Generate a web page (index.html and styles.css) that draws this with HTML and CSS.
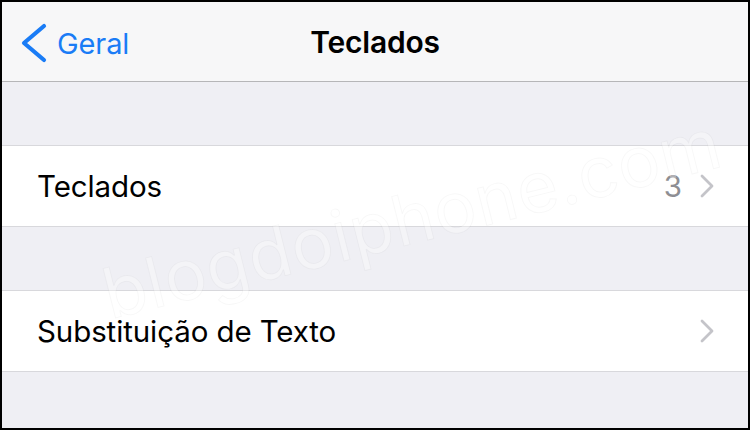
FILE: index.html
```html
<!DOCTYPE html>
<html lang="pt-BR">

<head>
  <meta charset="UTF-8" />
  <meta name="viewport" content="width=device-width, initial-scale=1.0" />
  <title>Teclados</title>
  <link rel="stylesheet" href="styles.css">
</head>

<body>
  <div class="tela">
    <!-- Barra de navegação -->
    <div class="barra">
      <div class="voltar">
        <svg class="setaVoltar" width="28" height="40" viewBox="0 0 28 40">
          <polyline points="24,3 4,20 24,37" fill="none" stroke="#1a7cf6" stroke-width="4.2" stroke-linecap="round" stroke-linejoin="round" />
        </svg>
        <span>Geral</span>
      </div>
      <h1>Teclados</h1>
    </div>

    <div class="espaco"></div>

    <div class="linha">
      <span class="rotulo">Teclados</span>
      <span class="valor">3</span>
      <svg class="seta" width="18" height="26" viewBox="0 0 18 26">
        <polyline points="4,3 14,13 4,23" fill="none" stroke="#c4c4c9" stroke-width="2.8" stroke-linecap="round" stroke-linejoin="round" />
      </svg>
    </div>

    <div class="espaco"></div>

    <div class="linha">
      <span class="rotulo">Substituição de Texto</span>
      <svg class="seta" width="18" height="26" viewBox="0 0 18 26">
        <polyline points="4,3 14,13 4,23" fill="none" stroke="#c4c4c9" stroke-width="2.8" stroke-linecap="round" stroke-linejoin="round" />
      </svg>
    </div>

    <div class="resto"></div>

    <!-- marca d'agua -->
    <div class="marca">blogdoiphone.com</div>
  </div>
</body>

</html>
```

FILE: styles.css
```css
body {
  margin: 0;
  background-color: #000;
  font-family: Inter, "Noto Sans", sans-serif;
}

.tela {
  position: relative;
  width: 746px;
  height: 426px;
  border: 2px solid #000;
  background-color: #efeff4;
  display: flex;
  flex-direction: column;
  overflow: hidden;
}

.barra {
  position: relative;
  height: 79px;
  background-color: #f7f7f8;
  border-bottom: 1px solid #b6b6b8;
  display: flex;
  align-items: center;
  justify-content: center;
}

.voltar {
  position: absolute;
  left: 18px;
  top: 21px;
  display: flex;
  align-items: center;
  gap: 9px;
  color: #1a7cf6;
  font-size: 29px;
  letter-spacing: -0.1px;
}

h1 {
  margin: 0;
  font-size: 30px;
  font-weight: 600;
  color: #000;
  letter-spacing: -0.2px;
}

.espaco {
  height: 63px;
}

.linha {
  height: 80px;
  background-color: #fff;
  border-top: 1px solid #d8d8dc;
  border-bottom: 1px solid #d8d8dc;
  display: flex;
  align-items: center;
  padding-left: 35px;
  padding-right: 32px;
  font-size: 29.5px;
  color: #000;
}

.rotulo {
  flex: 1;
  letter-spacing: -0.1px;
}

.valor {
  color: #8e8e93;
  margin-right: 16px;
}

.resto {
  flex: 1;
}

.marca {
  position: absolute;
  left: 102px;
  top: 250px;
  transform: rotate(-14deg);
  transform-origin: left center;
  font-size: 70px;
  letter-spacing: 1px;
  color: rgba(255, 255, 255, 0.3);
  -webkit-text-stroke: 1px rgba(0, 0, 0, 0.03);
  white-space: nowrap;
  pointer-events: none;
}
```
